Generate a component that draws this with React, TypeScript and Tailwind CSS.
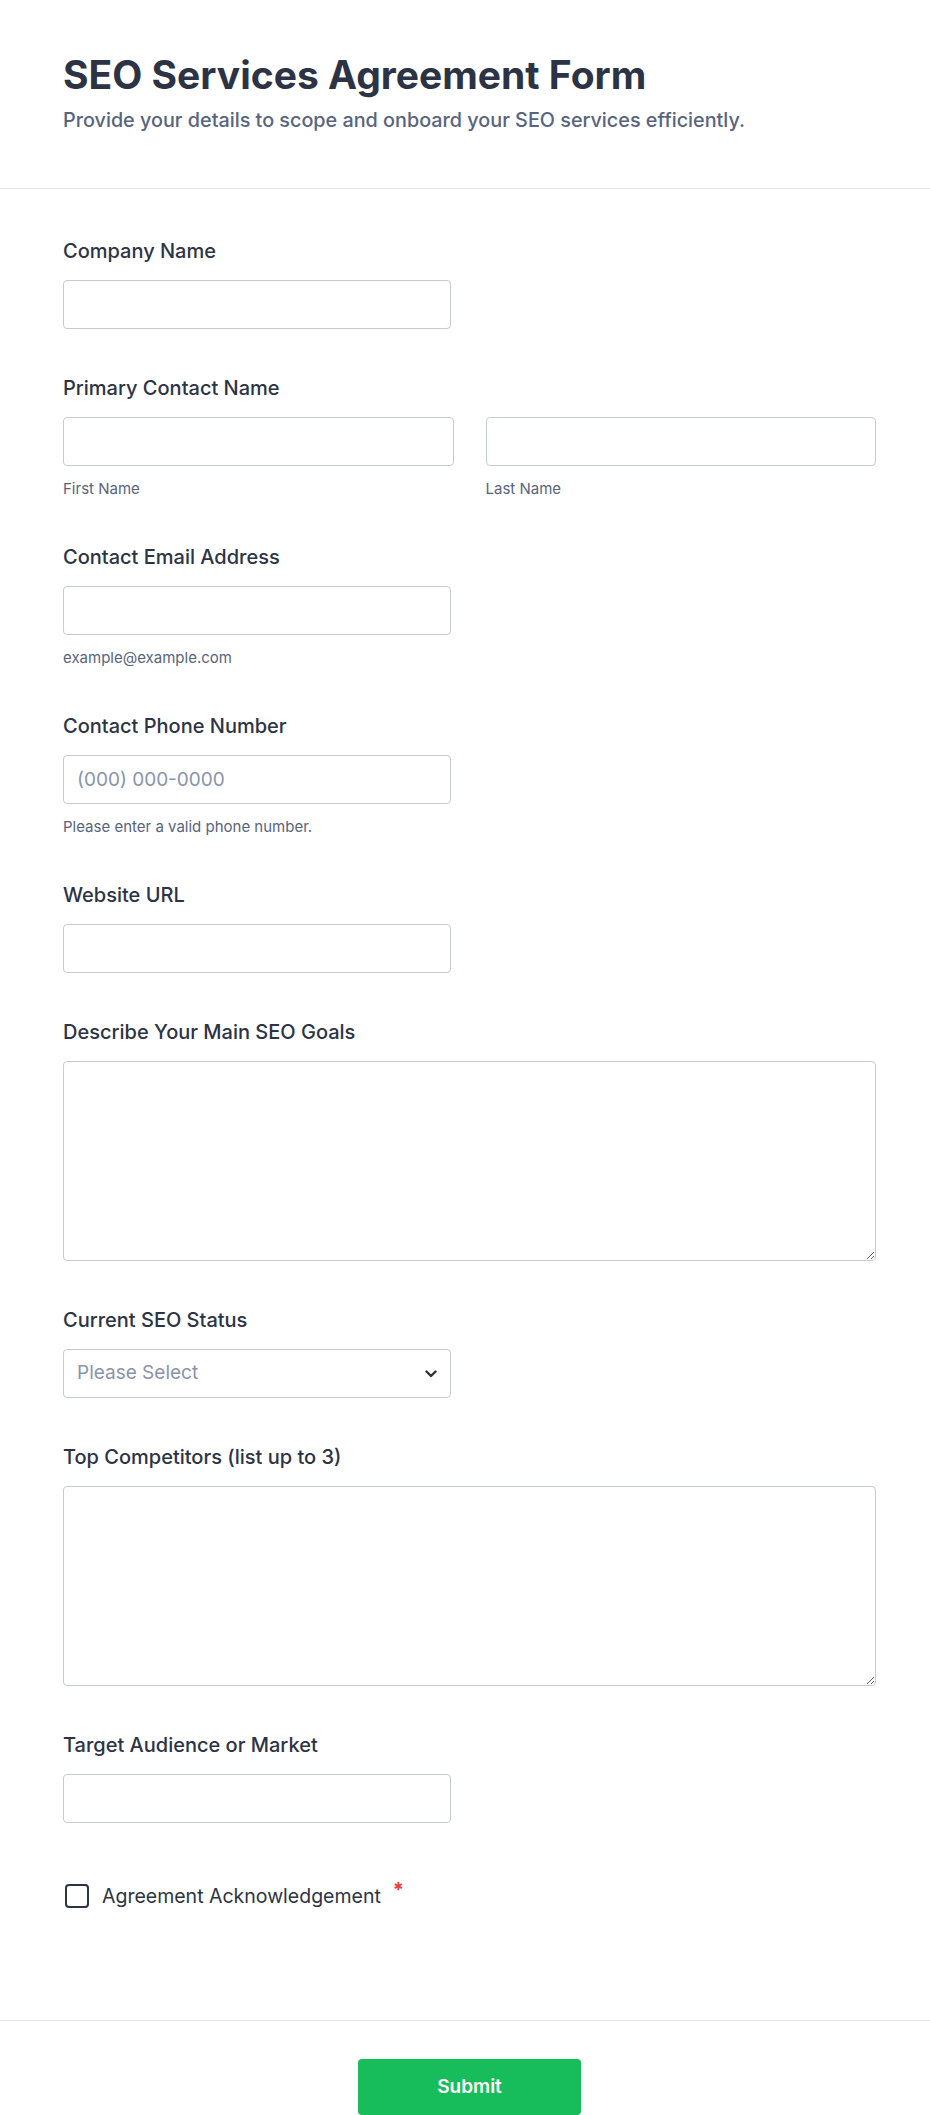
import React from "react";

const font = { fontFamily: "Inter, 'Noto Sans', sans-serif" };

function Label({ children }: { children: React.ReactNode }) {
  return (
    <div className="h-[24px] text-[20px] leading-[24px] font-medium text-[#2c3345]">
      {children}
    </div>
  );
}

function Sub({ children }: { children: React.ReactNode }) {
  return (
    <div className="mt-[14px] h-[18px] text-[15px] leading-[18px] text-[#57647e]">
      {children}
    </div>
  );
}

const inputCls =
  "block h-[49px] w-full rounded-[4px] border border-[#c3cad8] bg-white px-[13px] text-[19px] text-[#2c3345] placeholder:text-[#8894ab] outline-none";

function TextField({ label, sub, placeholder }: { label: string; sub?: string; placeholder?: string }) {
  return (
    <div className="mb-[47px]">
      <Label>{label}</Label>
      <div className="mt-[17px] w-[388px]">
        <input className={inputCls} placeholder={placeholder} style={font} />
      </div>
      {sub && <Sub>{sub}</Sub>}
    </div>
  );
}

function AreaField({ label }: { label: string }) {
  return (
    <div className="mb-[47px]">
      <Label>{label}</Label>
      <textarea
        className="mt-[17px] block h-[200px] w-full rounded-[4px] border border-[#c3cad8] bg-white px-[13px] py-[10px] text-[19px] text-[#2c3345] outline-none"
        style={font}
      />
    </div>
  );
}

export default function App() {
  return (
    <div className="min-h-screen bg-white" style={font}>
      {/* Form header */}
      <header className="border-b border-[#e3e5eb] pl-[63px] pr-[54px] pt-[53px] pb-[56px]">
        <h1 className="text-[39px] leading-[44px] font-bold text-[#2c3345]">
          SEO Services Agreement Form
        </h1>
        <p className="mt-[11px] text-[19.8px] leading-[24px] font-medium text-[#57647e]">
          Provide your details to scope and onboard your SEO services efficiently.
        </p>
      </header>

      {/* Fields */}
      <main className="pl-[63px] pr-[54px] pt-[50px]">
        <TextField label="Company Name" />

        <div className="mb-[47px]">
          <Label>Primary Contact Name</Label>
          <div className="mt-[17px] grid grid-cols-2 gap-x-[32px]">
            <div>
              <input className={inputCls} style={font} />
              <Sub>First Name</Sub>
            </div>
            <div>
              <input className={inputCls} style={font} />
              <Sub>Last Name</Sub>
            </div>
          </div>
        </div>

        <TextField label="Contact Email Address" sub="example@example.com" />
        <TextField
          label="Contact Phone Number"
          placeholder="(000) 000-0000"
          sub="Please enter a valid phone number."
        />
        <TextField label="Website URL" />
        <AreaField label="Describe Your Main SEO Goals" />

        <div className="mb-[47px]">
          <Label>Current SEO Status</Label>
          <div className="relative mt-[17px] w-[388px]">
            <div className="flex h-[49px] items-center rounded-[4px] border border-[#c3cad8] bg-white px-[13px] text-[19px] text-[#8894ab]">
              Please Select
            </div>
            <svg
              className="absolute right-[14px] top-1/2 -translate-y-1/2"
              width="12"
              height="8"
              viewBox="0 0 12 8"
              fill="none"
            >
              <path
                d="M1.5 1.5L6 6L10.5 1.5"
                stroke="#2c3345"
                strokeWidth="2.4"
                strokeLinecap="round"
                strokeLinejoin="round"
              />
            </svg>
          </div>
        </div>

        <AreaField label="Top Competitors (list up to 3)" />
        <TextField label="Target Audience or Market" />

        <label className="mt-[61px] ml-[2px] flex items-center gap-[13px]">
          <span className="h-[24px] w-[24px] shrink-0 rounded-[4px] border-2 border-[#2c3345] bg-white" />
          <span className="text-[19.5px] leading-[24px] text-[#2c3345]">Agreement Acknowledgement</span>
          <span className="-mt-[12px] ml-[-1px] text-[20px] leading-[20px] font-bold text-[#f23a3c]">*</span>
        </label>
        <div className="h-[112px]" />
      </main>

      {/* Footer */}
      <footer className="flex justify-center border-t border-[#e3e5eb] pl-[63px] pr-[54px] pt-[38px] pb-[40px]">
        <button className="h-[56px] w-[223px] rounded-[4px] bg-[#18bd5b] text-[19px] font-semibold text-white">
          Submit
        </button>
      </footer>
    </div>
  );
}
